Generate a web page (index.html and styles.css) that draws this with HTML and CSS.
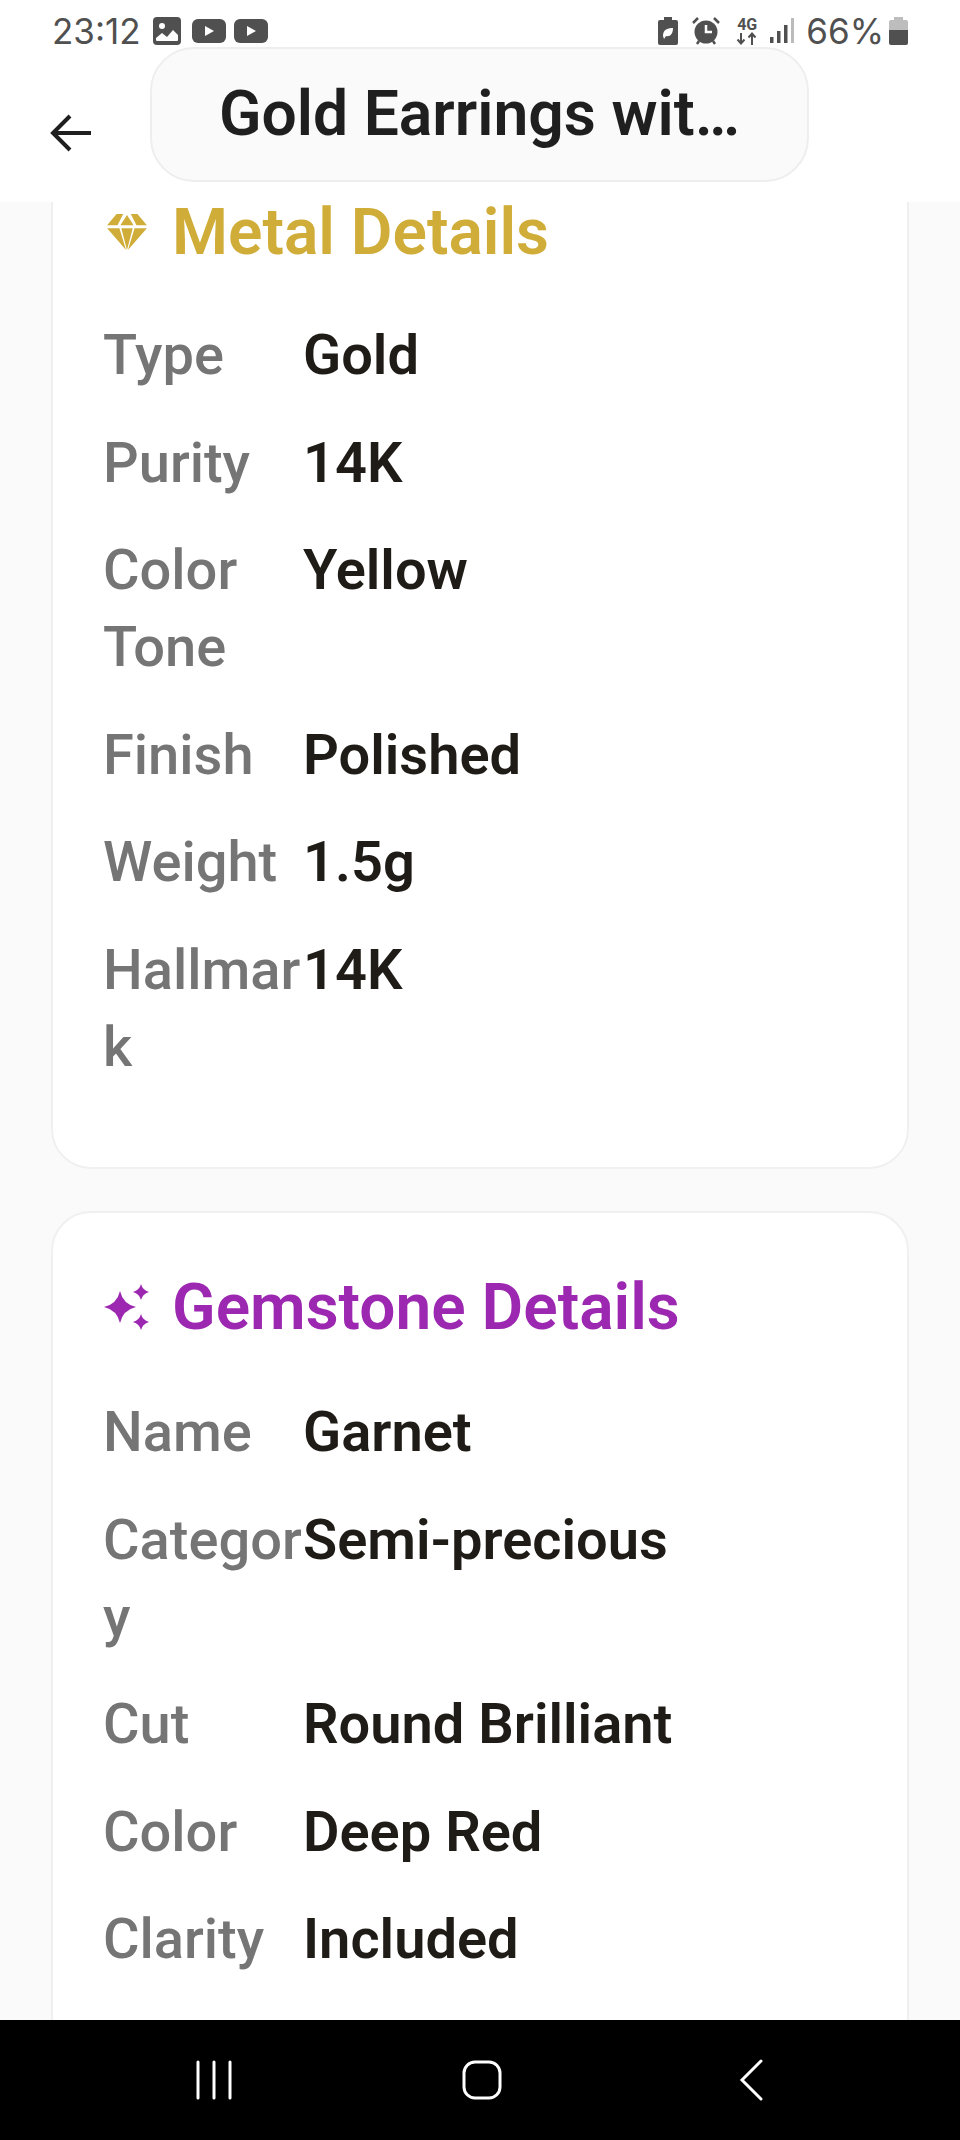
FILE: index.html
```html
<!DOCTYPE html>
<html lang="en">
<head>
  <meta charset="UTF-8">
  <meta name="viewport" content="width=device-width, initial-scale=1.0">
  <title>Gold Earrings</title>
  <link rel="stylesheet" href="styles.css">
</head>
<body>
  <div class="screen">
    <header class="top">
      <div class="status">
        <div class="status-left">
          <span class="time">23:12</span>
          <svg class="ic" width="28" height="28" viewBox="0 0 28 28"><rect x="0" y="0" width="28" height="28" rx="4" fill="#505050"/><circle cx="9" cy="9" r="3" fill="#fff"/><path d="M3 21l6-5 5 4 6-7 5 5v5a1 1 0 0 1-1 1H4a1 1 0 0 1-1-1z" fill="#fff"/></svg>
          <svg class="ic yt" width="34" height="24" viewBox="0 0 34 24"><rect width="34" height="24" rx="6" fill="#505050"/><path d="M13 7l9 5-9 5z" fill="#fff"/></svg>
          <svg class="ic yt2" width="34" height="24" viewBox="0 0 34 24"><rect width="34" height="24" rx="6" fill="#505050"/><path d="M13 7l9 5-9 5z" fill="#fff"/></svg>
        </div>
        <div class="status-right">
          <svg class="ic" width="20" height="28" viewBox="0 0 20 28"><path d="M6 0h8v3h4a2 2 0 0 1 2 2v21a2 2 0 0 1-2 2H2a2 2 0 0 1-2-2V5a2 2 0 0 1 2-2h4z" fill="#505050"/><path d="M5 19c0-6 4-8 10-8 0 6-3 9-7 8l-2 3z" fill="#fff"/></svg>
          <svg class="ic alarm" width="28" height="28" viewBox="0 0 28 28"><circle cx="14" cy="15" r="11.500" fill="#505050"/><path d="M1 6l5-5M27 6l-5-5M5 27l2-3M23 27l-2-3" stroke="#505050" stroke-width="2.500" fill="none"/><path d="M14 8v7h6" stroke="#fff" stroke-width="2.500" fill="none"/></svg>
          <div class="net">
            <span class="net-g">4G</span>
            <svg width="22" height="13" viewBox="0 0 22 13"><path d="M5 1v10M1.500 7.500L5 11.500l3.500-4M16 13V2M12.500 5.500L16 1.500l3.500 4" stroke="#505050" stroke-width="2" fill="none"/></svg>
          </div>
          <svg class="ic signal" width="24" height="26" viewBox="0 0 24 26"><rect y="19" width="3.500" height="6" fill="#505050"/><rect x="7" y="13" width="3.500" height="12" fill="#505050"/><rect x="14" y="7" width="3.500" height="18" fill="#505050"/><rect x="21" y="0" width="3" height="25" fill="#bbb"/></svg>
          <span class="batt-text">66%</span>
          <svg class="ic" width="19" height="28" viewBox="0 0 19 28"><path d="M5 0h9v3h3a2 2 0 0 1 2 2v8H0V5a2 2 0 0 1 2-2h3z" fill="#bdbdbd"/><path d="M0 13h19v13a2 2 0 0 1-2 2H2a2 2 0 0 1-2-2z" fill="#505050"/></svg>
        </div>
      </div>
      <div class="toolbar">
        <svg class="back" width="44" height="44" viewBox="0 0 44 44"><path d="M42 22H5M21 5L4 22l17 17" stroke="#1f1f1f" stroke-width="4" fill="none"/></svg>
        <div class="title-pill"><span class="title">Gold Earrings wit…</span></div>
      </div>
    </header>

    <main class="content">
      <section class="card card-first">
        <h2 class="card-title gold">
          <svg width="40" height="36" viewBox="0 0 42 38"><path d="M10 0h7l-6 12H0zM25 0h7l10 12H31zM21 1l7 11H14zM0 15h13l7 23zM29 15h13L22 38zM15 15h12l-6 23z" fill="#d0ad38"/></svg>
          Metal Details
        </h2>
        <div class="row"><span class="key">Type</span><span class="val">Gold</span></div>
        <div class="row"><span class="key">Purity</span><span class="val">14K</span></div>
        <div class="row"><span class="key">Color Tone</span><span class="val">Yellow</span></div>
        <div class="row"><span class="key">Finish</span><span class="val">Polished</span></div>
        <div class="row"><span class="key">Weight</span><span class="val">1.5g</span></div>
        <div class="row"><span class="key">Hallmark</span><span class="val">14K</span></div>
      </section>

      <section class="card">
        <h2 class="card-title purple">
          <svg width="46" height="46" viewBox="0 0 46 46"><path d="M16 7q3 13 16 16-13 3-16 16-3-13-16-16 13-3 16-16zM37 0q1.500 6 8 8-6.500 2-8 8-1.500-6-8-8 6.500-2 8-8zM37 30q1.500 6 8 8-6.500 2-8 8-1.500-6-8-8 6.500-2 8-8z" fill="#9c27b0"/></svg>
          Gemstone Details
        </h2>
        <div class="row"><span class="key">Name</span><span class="val">Garnet</span></div>
        <div class="row"><span class="key">Category</span><span class="val">Semi-precious</span></div>
        <div class="row"><span class="key">Cut</span><span class="val">Round Brilliant</span></div>
        <div class="row"><span class="key">Color</span><span class="val">Deep Red</span></div>
        <div class="row"><span class="key">Clarity</span><span class="val">Included</span></div>
      </section>
    </main>

    <nav class="navbar">
      <svg class="nav-recent" width="40" height="40" viewBox="0 0 40 40"><path d="M3 2v36M19 2v36M35 2v36" stroke="#fff" stroke-width="3" stroke-linecap="round"/></svg>
      <svg class="nav-home" width="40" height="40" viewBox="0 0 40 40"><rect x="2" y="2" width="36" height="36" rx="11" fill="none" stroke="#fff" stroke-width="3"/></svg>
      <svg class="nav-back" width="24" height="44" viewBox="0 0 24 44"><path d="M22 3L3 22l19 19" fill="none" stroke="#fff" stroke-width="3" stroke-linecap="round"/></svg>
    </nav>
  </div>
</body>
</html>
```

FILE: styles.css
```css
* {
  box-sizing: border-box;
}
body {
  margin: 0;
  font-family: Roboto, "Liberation Sans", sans-serif;
  background-color: #fafafa;
}
.screen {
  width: 960px;
  height: 2140px;
  display: flex;
  flex-direction: column;
  overflow: hidden;
}
.top {
  background: #fff;
  height: 202px;
  flex: none;
  position: relative;
  z-index: 1;
}
.status {
  height: 47px;
  padding: 17px 52px 0 52px;
  display: flex;
  justify-content: space-between;
  align-items: flex-start;
}
.status-left, .status-right {
  display: flex;
  align-items: center;
  height: 28px;
}
.time, .batt-text {
  font-family: Inter, Roboto, sans-serif;
  font-size: 35px;
  color: #505050;
}
.ic {
  flex: none;
}
.time {
  margin-right: 12px;
}
.yt {
  margin-left: 11px;
}
.yt2 {
  margin-left: 8px;
}
.alarm {
  margin-left: 14px;
}
.net {
  width: 22px;
  margin-left: 16px;
  display: flex;
  flex-direction: column;
  align-items: center;
}
.net-g {
  font-size: 16px;
  line-height: 15px;
  font-weight: 700;
  color: #505050;
}
.signal {
  margin-left: 12px;
}
.batt-text {
  margin-left: 12px;
  margin-right: 5px;
}
.toolbar {
  display: flex;
  align-items: center;
  padding-left: 49px;
}
.back {
  flex: none;
  margin-top: 37px;
}
.title-pill {
  width: 659px;
  height: 135px;
  margin-left: 57px;
  padding: 0 0 2px 67px;
  display: flex;
  align-items: center;
  background: #fafafa;
  border: 2px solid #eeeeee;
  border-radius: 44px;
}
.title {
  font-size: 62.400px;
  font-weight: 600;
  color: #1f1f1f;
}
.content {
  flex: 1;
  min-height: 0;
  padding: 0 51px;
}
.card {
  background: #fff;
  border: 2px solid #f0f0f0;
  border-radius: 40px;
  padding: 59px 50px 51px;
  margin-bottom: 42px;
}
.card-first {
  margin-top: -66px;
}
.card-title {
  display: flex;
  align-items: center;
  gap: 22px;
  height: 70px;
  margin: 0 0 52px;
  font-size: 64px;
  font-weight: 600;
}
.card-first .card-title {
  margin-bottom: 50px;
}
.card-title svg {
  width: 46px;
  flex: none;
  margin-left: 1px;
}
.gold {
  color: #d0ad38;
}
.purple {
  color: #9c27b0;
}
.row {
  display: flex;
  margin-bottom: 30.800px;
  font-size: 56px;
  line-height: 76.800px;
}
.key {
  width: 200px;
  flex: none;
  color: #757575;
  font-weight: 500;
  overflow-wrap: anywhere;
}
.val {
  font-weight: 600;
  color: #1f1b16;
}
.navbar {
  flex: none;
  height: 120px;
  background: #000;
  display: flex;
  align-items: center;
  padding: 0 0 0 195px;
}
.nav-home {
  margin-left: 227px;
}
.nav-back {
  margin-left: 237px;
}
```
